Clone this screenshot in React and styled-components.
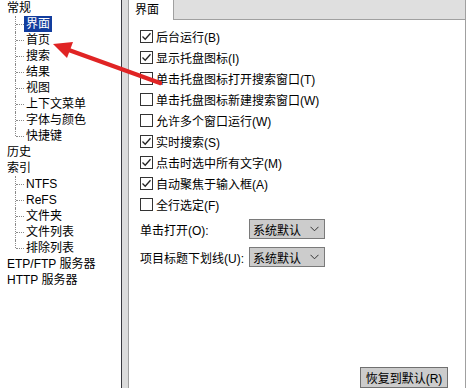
import styled, { createGlobalStyle } from "styled-components";

const Global = createGlobalStyle`
  html, body {
    margin: 0;
    padding: 0;
    background: #ffffff;
  }
  body {
    font-family: "Liberation Sans", "Noto Sans CJK SC", sans-serif;
    font-size: 12px;
    color: #000;
  }
`;

const Page = styled.div`
  position: relative;
  display: flex;
  width: 466px;
  height: 388px;
  overflow: hidden;
  background: #dcdcdc;
`;

const Tree = styled.ul`
  width: 121px;
  margin: 0 6px 0 0;
  padding: 0;
  list-style: none;
  background: #fff;
  border-right: 1px solid #3a3a40;
  flex-shrink: 0;
`;

const Node = styled.li`
  padding-left: 5px;
`;

const Label = styled.span`
  display: inline-block;
  height: 16px;
  line-height: 16px;
  padding: 0 2px;
  white-space: nowrap;
  background: ${({ selected }) => (selected ? "#123d9e" : "transparent")};
  color: ${({ selected }) => (selected ? "#fff" : "#000")};
`;

const Children = styled.ul`
  margin: 0 0 0 10px;
  padding: 0;
  list-style: none;
`;

const Child = styled.li`
  position: relative;
  padding-left: 9px;
  height: 16px;

  &::before {
    content: "";
    position: absolute;
    left: 0;
    top: 0;
    height: ${({ last }) => (last ? "8px" : "16px")};
    border-left: 1px dotted #8a8a8a;
  }

  &::after {
    content: "";
    position: absolute;
    left: 1px;
    top: 8px;
    width: 8px;
    border-top: 1px dotted #8a8a8a;
  }
`;

const Panel = styled.div`
  flex: 1;
  display: flex;
  flex-direction: column;
  background: #fff;
  border-left: 1px solid #a0a0a0;
  border-right: 1px solid #a0a0a0;
`;

const TabBar = styled.div`
  display: flex;
  height: 20px;
  background: #dfdfdf;
`;

const Tab = styled.div`
  width: 38px;
  padding-left: 6px;
  line-height: 20px;
  background: #fff;
  border-right: 1px solid #a0a0a0;
`;

const TabFill = styled.div`
  flex: 1;
  border-bottom: 1px solid #a0a0a0;
`;

const Content = styled.div`
  flex: 1;
  display: flex;
  flex-direction: column;
  padding: 6px 0 0 11px;
`;

const CheckRow = styled.label`
  display: flex;
  align-items: center;
  gap: 2px;
  height: 21px;
  white-space: nowrap;
`;

const Box = styled.span`
  display: inline-flex;
  width: 11px;
  height: 11px;
  border: 1px solid #333;
  background: #fff;
  margin-right: 1px;
`;

const SelectRow = styled.div`
  display: flex;
  align-items: center;
  height: 28px;
`;

const SelectLabel = styled.span`
  width: 109px;
  white-space: nowrap;
`;

const Select = styled.div`
  display: flex;
  align-items: center;
  justify-content: space-between;
  width: 74px;
  height: 18px;
  padding: 0 5px 0 3px;
  box-sizing: border-box;
  width: 76px;
  height: 20px;
  border: 1px solid #7a7a7a;
  background: #cccccc;
`;

const Footer = styled.div`
  margin-top: auto;
  display: flex;
  justify-content: flex-end;
  padding-right: 17px;
`;

const Button = styled.div`
  width: 88px;
  height: 21px;
  box-sizing: border-box;
  border: 1px solid #707070;
  background: #cccccc;
  display: flex;
  align-items: center;
  justify-content: center;
`;

const Arrow = styled.svg`
  position: absolute;
  left: 0;
  top: 0;
  pointer-events: none;
`;

function Check({ checked }) {
  return (
    <Box>
      {checked && (
        <svg width="11" height="11" viewBox="0 0 11 11">
          <path d="M1.5 5.5 L4.2 8.2 L9.5 2.2" fill="none" stroke="#222" strokeWidth="1.3" />
        </svg>
      )}
    </Box>
  );
}

const options = [
  ["后台运行(B)", true],
  ["显示托盘图标(I)", true],
  ["单击托盘图标打开搜索窗口(T)", false],
  ["单击托盘图标新建搜索窗口(W)", false],
  ["允许多个窗口运行(W)", false],
  ["实时搜索(S)", true],
  ["点击时选中所有文字(M)", true],
  ["自动聚焦于输入框(A)", true],
  ["全行选定(F)", false],
];

const tree = [
  { name: "常规", children: ["界面", "首页", "搜索", "结果", "视图", "上下文菜单", "字体与颜色", "快捷键"] },
  { name: "历史" },
  { name: "索引", children: ["NTFS", "ReFS", "文件夹", "文件列表", "排除列表"] },
  { name: "ETP/FTP 服务器" },
  { name: "HTTP 服务器" },
];

export default function App() {
  return (
    <>
      <Global />
      <Page>
        <Tree>
          {tree.map((node) => (
            <Node key={node.name}>
              <Label>{node.name}</Label>
              {node.children && (
                <Children>
                  {node.children.map((c, i) => (
                    <Child key={c} last={i === node.children.length - 1}>
                      <Label selected={c === "界面"}>{c}</Label>
                    </Child>
                  ))}
                </Children>
              )}
            </Node>
          ))}
        </Tree>
        <Panel>
          <TabBar>
            <Tab>界面</Tab>
            <TabFill />
          </TabBar>
          <Content>
            {options.map(([text, checked]) => (
              <CheckRow key={text}>
                <Check checked={checked} />
                {text}
              </CheckRow>
            ))}
            <SelectRow>
              <SelectLabel>单击打开(O):</SelectLabel>
              <Select>
                系统默认
                <svg width="9" height="6" viewBox="0 0 9 6">
                  <path d="M0.5 0.8 L4.5 4.8 L8.5 0.8" fill="none" stroke="#333" strokeWidth="1" />
                </svg>
              </Select>
            </SelectRow>
            <SelectRow>
              <SelectLabel>项目标题下划线(U):</SelectLabel>
              <Select>
                系统默认
                <svg width="9" height="6" viewBox="0 0 9 6">
                  <path d="M0.5 0.8 L4.5 4.8 L8.5 0.8" fill="none" stroke="#333" strokeWidth="1" />
                </svg>
              </Select>
            </SelectRow>
            <Footer>
              <Button>恢复到默认(R)</Button>
            </Footer>
          </Content>
        </Panel>
        <Arrow width="466" height="388" viewBox="0 0 466 388">
          <line x1="160" y1="83" x2="66" y2="49" stroke="#e02424" strokeWidth="4.5" strokeLinecap="round" />
          <polygon points="53,44 73,42 67,58" fill="#e02424" />
        </Arrow>
      </Page>
    </>
  );
}
